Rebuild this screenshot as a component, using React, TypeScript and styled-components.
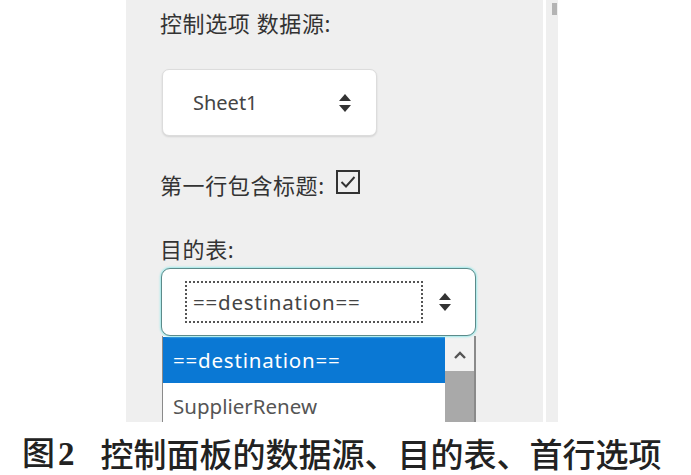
import styled, { createGlobalStyle } from "styled-components";

const GlobalStyle = createGlobalStyle`
  html, body {
    margin: 0;
    padding: 0;
    background: #ffffff;
  }
  body {
    font-family: "Segoe UI", "Noto Sans", "Noto Sans CJK SC", sans-serif;
    color: #333333;
  }
`;

const uiFont = `"Noto Sans", "Noto Sans CJK SC", sans-serif`;

const SortArrows = () => (
  <svg width="14" height="20" viewBox="0 0 14 20">
    <path d="M7 1 L13 8 L1 8 Z" fill="#333" />
    <path d="M7 19 L13 12 L1 12 Z" fill="#333" />
  </svg>
);

const Check = () => (
  <svg width="20" height="20" viewBox="0 0 20 20">
    <path d="M3.5 10 L8 14.5 L16.5 5" fill="none" stroke="#333" strokeWidth="1.9" />
  </svg>
);

const Chevron = () => (
  <svg width="14" height="10" viewBox="0 0 14 10">
    <path d="M2 8 L7 3 L12 8" fill="none" stroke="#555" strokeWidth="2.4" />
  </svg>
);

const App = () => {
  return (
    <>
      <GlobalStyle />
      <Page>
        <Frame>
          <Panel>
            <Label>控制选项 数据源:</Label>
            <SourceSelect>
              <SelectText>Sheet1</SelectText>
              <SortArrows />
            </SourceSelect>
            <CheckRow>
              <InlineLabel>第一行包含标题:</InlineLabel>
              <CheckBox>
                <Check />
              </CheckBox>
            </CheckRow>
            <Label $gap={34}>目的表:</Label>
            <DestSelect>
              <FocusRing>==destination==</FocusRing>
              <ArrowSlot>
                <SortArrows />
              </ArrowSlot>
            </DestSelect>
            <DropList>
              <Items>
                <Item $selected $wide>
                  ==destination==
                </Item>
                <Item>SupplierRenew</Item>
              </Items>
              <ListScroll>
                <ScrollButton>
                  <Chevron />
                </ScrollButton>
                <ScrollThumb />
              </ListScroll>
            </DropList>
          </Panel>
          <Track>
            <TrackThumb />
          </Track>
        </Frame>
        <Caption>
          <FigNo>
            图<Num>2</Num>
          </FigNo>
          控制面板的数据源、目的表、首行选项
        </Caption>
      </Page>
    </>
  );
};

const Page = styled.div`
  display: flex;
  flex-direction: column;
  width: 691px;
  height: 475px;
  overflow: hidden;
`;

const Frame = styled.div`
  display: flex;
  flex-shrink: 0;
  margin-left: 126px;
  height: 422px;
`;

const Panel = styled.div`
  width: 417px;
  height: 422px;
  background: #efefef;
  padding: 8px 0 0 34px;
  box-sizing: border-box;
  display: flex;
  flex-direction: column;
  align-items: flex-start;
  overflow: hidden;

  & > * {
    flex-shrink: 0;
  }
`;

const Track = styled.div`
  width: 12px;
  margin-left: 3px;
  background: #efefef;
  display: flex;
  justify-content: flex-end;
  align-items: flex-start;
`;

const TrackThumb = styled.div`
  width: 5px;
  height: 12px;
  margin-top: 3px;
  margin-right: 1px;
  background: #b4b4b4;
`;

const Label = styled.div<{ $gap?: number }>`
  margin-top: ${(p) => p.$gap ?? 0}px;
  font-family: ${uiFont};
  font-size: 22px;
  letter-spacing: 0.6px;
  line-height: 30px;
  color: #333;
`;

const InlineLabel = styled.span`
  font-family: ${uiFont};
  font-size: 22px;
  letter-spacing: 0.6px;
  line-height: 30px;
  color: #333;
`;

const SourceSelect = styled.div`
  margin-top: 31px;
  margin-left: 2px;
  width: 215px;
  height: 67px;
  box-sizing: border-box;
  background: #ffffff;
  border: 1px solid #dcdcdc;
  border-radius: 7px;
  box-shadow: 0 1px 2px rgba(0, 0, 0, 0.12);
  display: flex;
  align-items: center;
  justify-content: space-between;
  padding: 0 24px 0 30px;
`;

const SelectText = styled.span`
  font-family: ${uiFont};
  font-size: 20px;
  color: #444;
`;

const CheckRow = styled.div`
  margin-top: 34px;
  display: flex;
  align-items: center;
  gap: 11px;
  height: 30px;
`;

const CheckBox = styled.div`
  width: 24px;
  height: 24px;
  box-sizing: border-box;
  border: 2px solid #333;
  display: flex;
  align-items: center;
  justify-content: center;
  margin-top: -6px;
`;

const DestSelect = styled.div`
  margin-top: 4px;
  margin-left: 1px;
  width: 315px;
  height: 68px;
  box-sizing: border-box;
  background: #ffffff;
  border: 1.5px solid #5c8a8a;
  border-radius: 9px;
  box-shadow: 0 0 2px 1px #9eeaea;
  display: flex;
  align-items: center;
  padding: 0 0 0 23px;
  position: relative;
  z-index: 1;
`;

const FocusRing = styled.div`
  width: 238px;
  height: 42px;
  box-sizing: border-box;
  border: 2px dotted #555;
  display: flex;
  align-items: center;
  padding-left: 6px;
  font-family: ${uiFont};
  font-size: 20.5px;
  letter-spacing: 0.8px;
  color: #444;
`;

const ArrowSlot = styled.div`
  flex: 1;
  display: flex;
  justify-content: center;
  padding-right: 8px;
`;

const DropList = styled.div`
  margin-left: 2px;
  width: 314px;
  flex: 1 0 auto;
  box-sizing: border-box;
  background: #ffffff;
  border-left: 1px solid #8a8a8a;
  border-right: 2px solid #8a8a8a;
  display: flex;
`;

const Items = styled.div`
  flex: 1;
  display: flex;
  flex-direction: column;
  padding-top: 1px;
`;

const Item = styled.div<{ $selected?: boolean; $wide?: boolean }>`
  height: 46px;
  display: flex;
  align-items: center;
  padding-left: 10px;
  font-family: ${uiFont};
  font-size: 20.5px;
  letter-spacing: ${(p) => (p.$wide ? "0.8px" : "0")};
  background: ${(p) => (p.$selected ? "#0a78d4" : "#ffffff")};
  color: ${(p) => (p.$selected ? "#ffffff" : "#555")};
`;

const ListScroll = styled.div`
  width: 29px;
  display: flex;
  flex-direction: column;
  background: #f0f0f0;
`;

const ScrollButton = styled.div`
  height: 33px;
  display: flex;
  align-items: center;
  justify-content: center;
  padding-top: 2px;
  background: #f2f2f2;
`;

const ScrollThumb = styled.div`
  flex: 1;
  background: #a9a9a9;
`;

const Caption = styled.div`
  flex: 1;
  display: flex;
  align-items: center;
  padding: 8px 0 0 22px;
  font-family: "Noto Sans CJK SC", sans-serif;
  font-weight: 500;
  font-size: 33px;
  line-height: 40px;
  color: #222;
  white-space: nowrap;
`;

const FigNo = styled.span`
  margin-right: 26px;
`;

const Num = styled.span`
  font-family: "Liberation Serif", serif;
  font-weight: 700;
  margin-left: 3px;
`;

export default App;
